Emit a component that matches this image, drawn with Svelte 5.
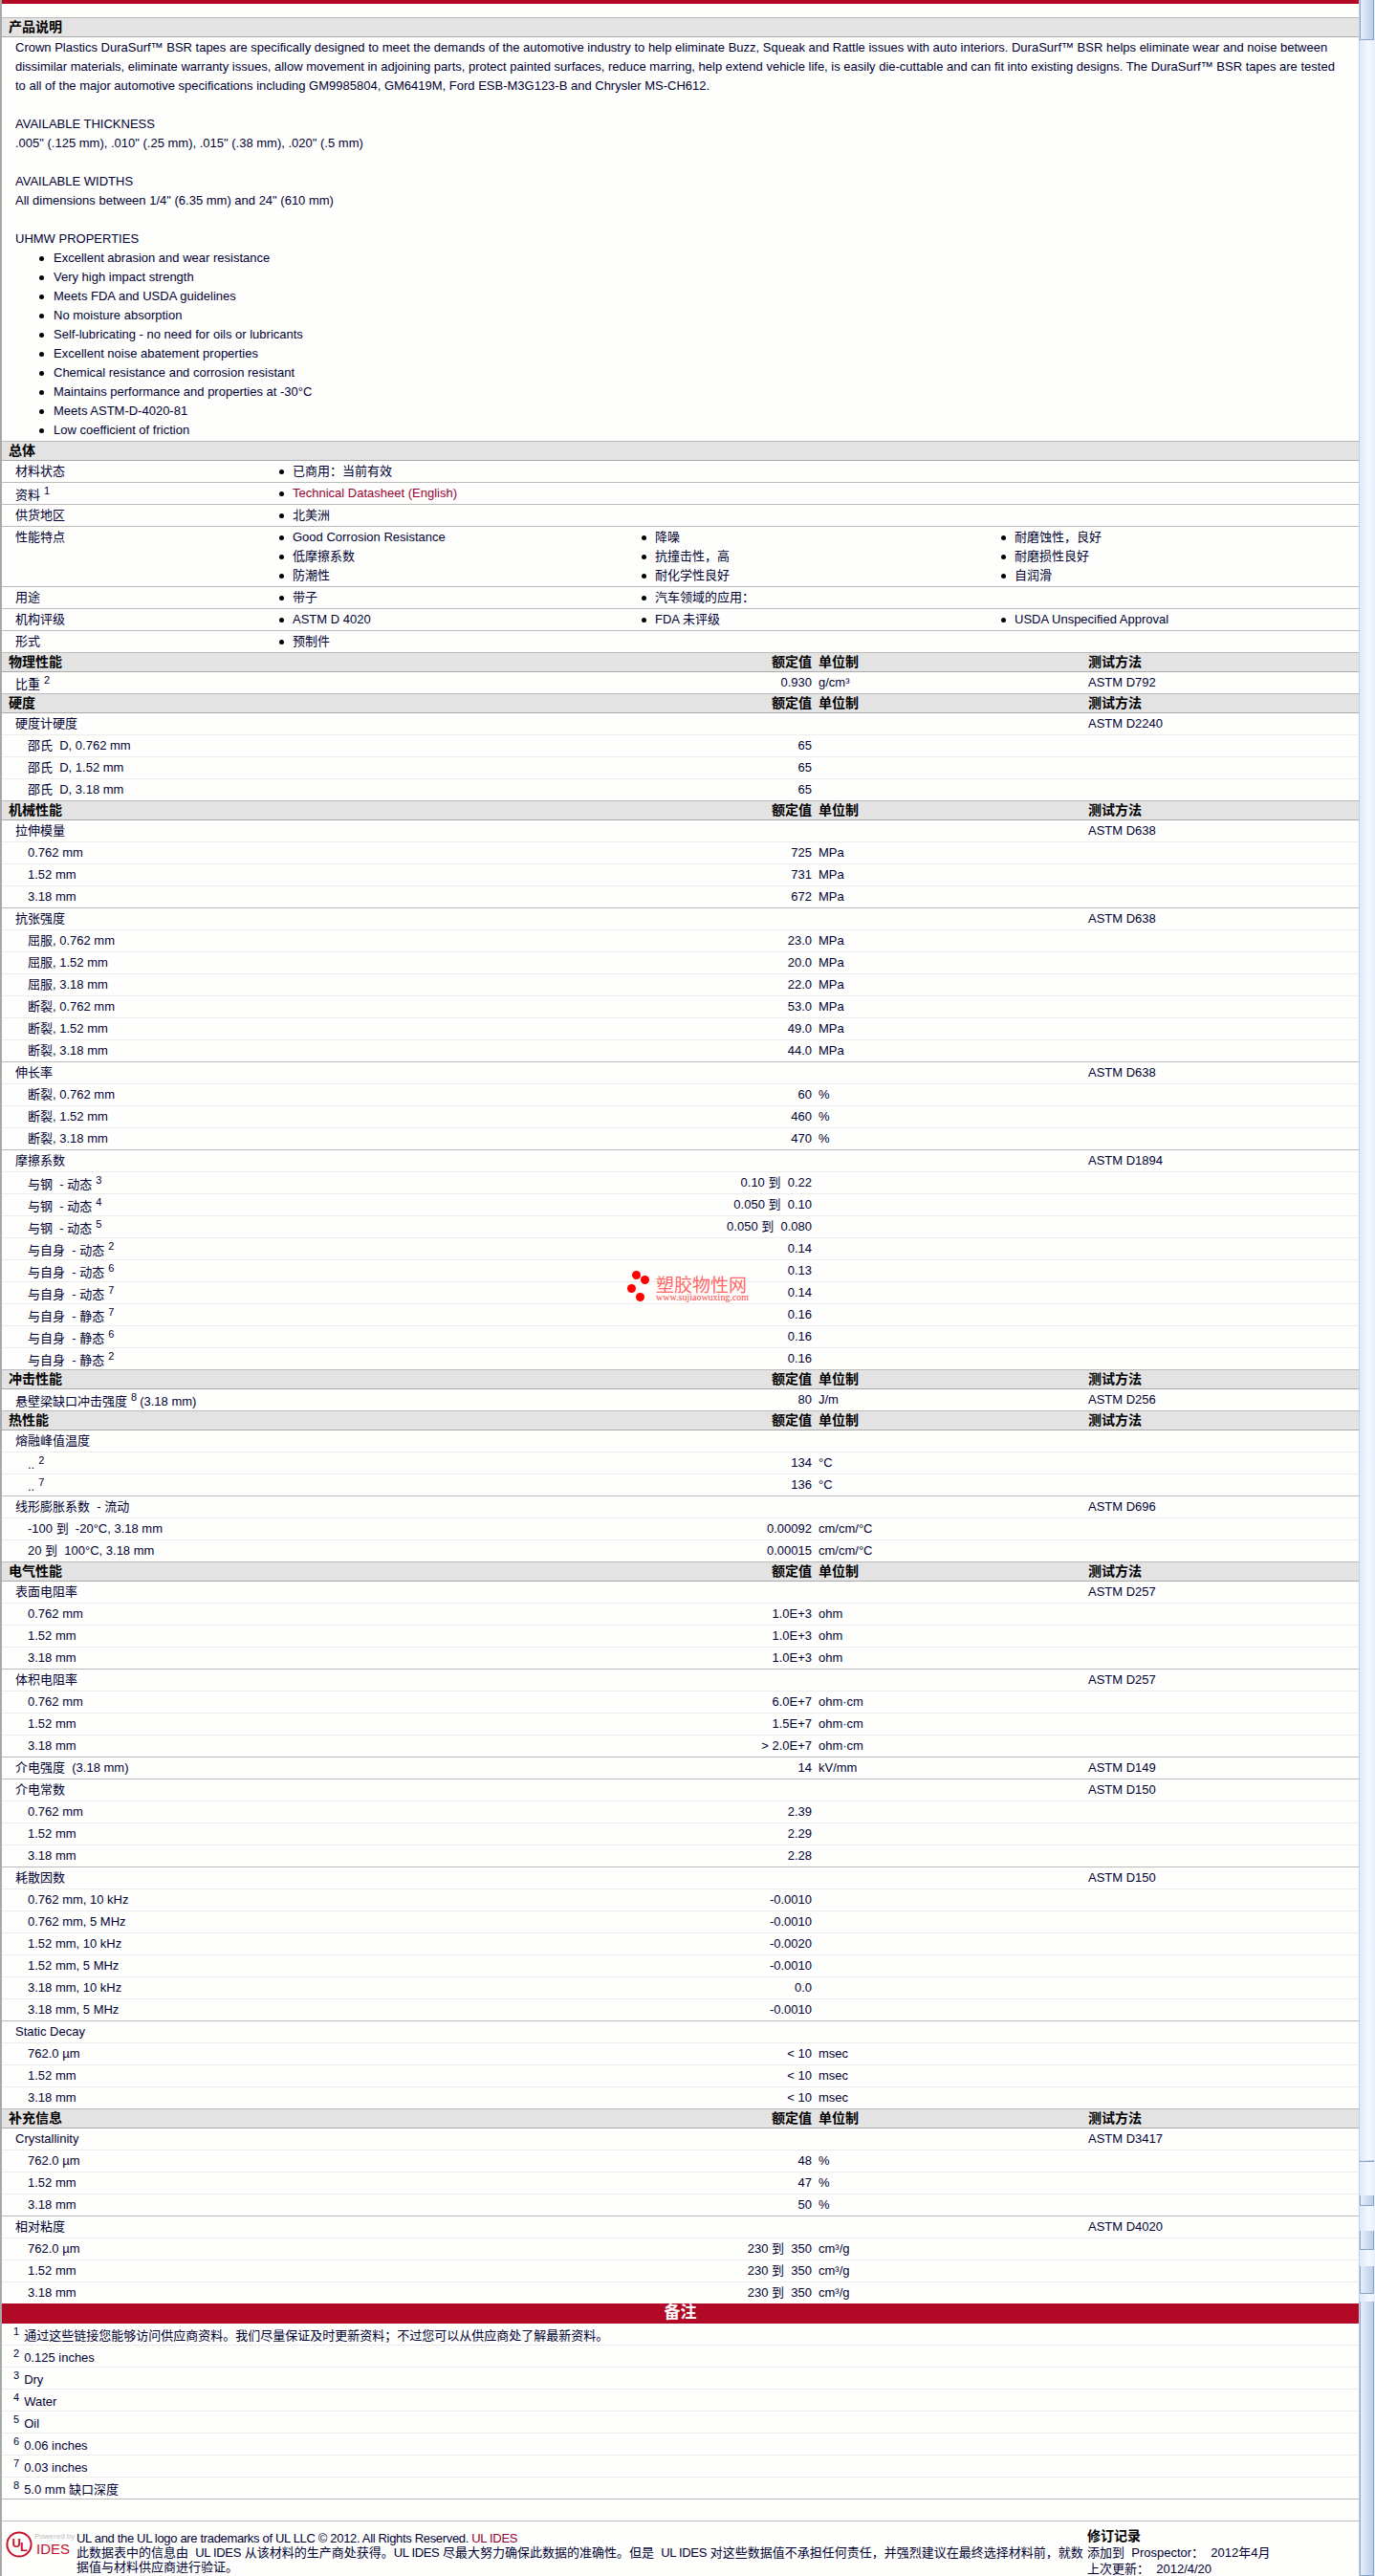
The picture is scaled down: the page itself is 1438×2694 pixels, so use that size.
<script lang="ts">
  type Row = {
    label: string;
    sup?: string;
    after?: string;
    value?: string;
    unit?: string;
    test?: string;
    indent?: boolean;
    end?: boolean;
  };
  type Section = { title: string; rows: Row[] };

  // builds a parameter group: head row + indented value rows, the last with the darker rule
  function group(label: string, test: string, items: [string, string, string?, string?][]): Row[] {
    const head: Row = { label, test };
    const rows = items.map(([l, value, unit, sup], i) => ({
      label: l,
      value,
      unit,
      sup,
      indent: true,
      end: i === items.length - 1,
    }));
    return [head, ...rows];
  }

  const sizes = (vals: string[], unit: string, first = "0.762 mm"): [string, string, string][] => [
    [first, vals[0], unit],
    ["1.52 mm", vals[1], unit],
    ["3.18 mm", vals[2], unit],
  ];

  const sections: Section[] = [
    {
      title: "物理性能",
      rows: [{ label: "比重", sup: "2", value: "0.930", unit: "g/cm³", test: "ASTM D792", end: true }],
    },
    {
      title: "硬度",
      rows: group("硬度计硬度", "ASTM D2240", [
        ["邵氏  D, 0.762 mm", "65"],
        ["邵氏  D, 1.52 mm", "65"],
        ["邵氏  D, 3.18 mm", "65"],
      ]),
    },
    {
      title: "机械性能",
      rows: [
        ...group("拉伸模量", "ASTM D638", sizes(["725", "731", "672"], "MPa")),
        ...group("抗张强度", "ASTM D638", [
          ["屈服, 0.762 mm", "23.0", "MPa"],
          ["屈服, 1.52 mm", "20.0", "MPa"],
          ["屈服, 3.18 mm", "22.0", "MPa"],
          ["断裂, 0.762 mm", "53.0", "MPa"],
          ["断裂, 1.52 mm", "49.0", "MPa"],
          ["断裂, 3.18 mm", "44.0", "MPa"],
        ]),
        ...group("伸长率", "ASTM D638", [
          ["断裂, 0.762 mm", "60", "%"],
          ["断裂, 1.52 mm", "460", "%"],
          ["断裂, 3.18 mm", "470", "%"],
        ]),
        ...group("摩擦系数", "ASTM D1894", [
          ["与钢  - 动态", "0.10 到  0.22", "", "3"],
          ["与钢  - 动态", "0.050 到  0.10", "", "4"],
          ["与钢  - 动态", "0.050 到  0.080", "", "5"],
          ["与自身  - 动态", "0.14", "", "2"],
          ["与自身  - 动态", "0.13", "", "6"],
          ["与自身  - 动态", "0.14", "", "7"],
          ["与自身  - 静态", "0.16", "", "7"],
          ["与自身  - 静态", "0.16", "", "6"],
          ["与自身  - 静态", "0.16", "", "2"],
        ]),
      ],
    },
    {
      title: "冲击性能",
      rows: [
        { label: "悬壁梁缺口冲击强度", sup: "8", after: "(3.18 mm)", value: "80", unit: "J/m", test: "ASTM D256", end: true },
      ],
    },
    {
      title: "热性能",
      rows: [
        ...group("熔融峰值温度", "", [
          ["..", "134", "°C", "2"],
          ["..", "136", "°C", "7"],
        ]),
        ...group("线形膨胀系数  - 流动", "ASTM D696", [
          ["-100 到  -20°C, 3.18 mm", "0.00092", "cm/cm/°C"],
          ["20 到  100°C, 3.18 mm", "0.00015", "cm/cm/°C"],
        ]),
      ],
    },
    {
      title: "电气性能",
      rows: [
        ...group("表面电阻率", "ASTM D257", sizes(["1.0E+3", "1.0E+3", "1.0E+3"], "ohm")),
        ...group("体积电阻率", "ASTM D257", sizes(["6.0E+7", "1.5E+7", "> 2.0E+7"], "ohm·cm")),
        { label: "介电强度", after: "  (3.18 mm)", value: "14", unit: "kV/mm", test: "ASTM D149", end: true },
        ...group("介电常数", "ASTM D150", sizes(["2.39", "2.29", "2.28"], "")),
        ...group("耗散因数", "ASTM D150", [
          ["0.762 mm, 10 kHz", "-0.0010"],
          ["0.762 mm, 5 MHz", "-0.0010"],
          ["1.52 mm, 10 kHz", "-0.0020"],
          ["1.52 mm, 5 MHz", "-0.0010"],
          ["3.18 mm, 10 kHz", "0.0"],
          ["3.18 mm, 5 MHz", "-0.0010"],
        ]),
        ...group("Static Decay", "", sizes(["< 10", "< 10", "< 10"], "msec", "762.0 µm")),
      ],
    },
    {
      title: "补充信息",
      rows: [
        ...group("Crystallinity", "ASTM D3417", sizes(["48", "47", "50"], "%", "762.0 µm")),
        ...group("相对粘度", "ASTM D4020", sizes(["230 到  350", "230 到  350", "230 到  350"], "cm³/g", "762.0 µm")),
      ],
    },
  ];

  const general = [
    { label: "材料状态", items: [["已商用：当前有效"]] },
    { label: "资料", sup: "1", link: true, items: [["Technical Datasheet (English)"]] },
    { label: "供货地区", items: [["北美洲"]] },
    {
      label: "性能特点",
      items: [
        ["Good Corrosion Resistance", "降噪", "耐磨蚀性，良好"],
        ["低摩擦系数", "抗撞击性，高", "耐磨损性良好"],
        ["防潮性", "耐化学性良好", "自润滑"],
      ],
    },
    { label: "用途", items: [["带子", "汽车领域的应用："]] },
    { label: "机构评级", items: [["ASTM D 4020", "FDA 未评级", "USDA Unspecified Approval"]] },
    { label: "形式", items: [["预制件"]] },
  ];

  const uhmw = [
    "Excellent abrasion and wear resistance",
    "Very high impact strength",
    "Meets FDA and USDA guidelines",
    "No moisture absorption",
    "Self-lubricating - no need for oils or lubricants",
    "Excellent noise abatement properties",
    "Chemical resistance and corrosion resistant",
    "Maintains performance and properties at -30°C",
    "Meets ASTM-D-4020-81",
    "Low coefficient of friction",
  ];

  const notes = [
    "通过这些链接您能够访问供应商资料。我们尽量保证及时更新资料；不过您可以从供应商处了解最新资料。",
    "0.125 inches",
    "Dry",
    "Water",
    "Oil",
    "0.06 inches",
    "0.03 inches",
    "5.0 mm 缺口深度",
  ];

  const thumbs = [
    { top: 0, height: 42 },
    { top: 2259, height: 2 },
    { top: 2296, height: 11 },
    { top: 2333, height: 20 },
    { top: 2370, height: 29 },
    { top: 2407, height: 287 },
  ];
</script>

<div class="page">
  <div class="sheet">
    <div class="topbar"></div>
    <div class="topgap"></div>

    <div class="section"><b>产品说明</b></div>
    <div class="desc">
      <p>Crown Plastics DuraSurf™ BSR tapes are specifically designed to meet the demands of the automotive industry to help eliminate Buzz, Squeak and Rattle issues with auto interiors. DuraSurf™ BSR helps eliminate wear and noise between</p>
      <p>dissimilar materials, eliminate warranty issues, allow movement in adjoining parts, protect painted surfaces, reduce marring, help extend vehicle life, is easily die-cuttable and can fit into existing designs. The DuraSurf™ BSR tapes are tested</p>
      <p>to all of the major automotive specifications including GM9985804, GM6419M, Ford ESB-M3G123-B and Chrysler MS-CH612.</p>
      <p class="gap">AVAILABLE THICKNESS</p>
      <p>.005" (.125 mm), .010" (.25 mm), .015" (.38 mm), .020" (.5 mm)</p>
      <p class="gap">AVAILABLE WIDTHS</p>
      <p>All dimensions between 1/4" (6.35 mm) and 24" (610 mm)</p>
      <p class="gap">UHMW PROPERTIES</p>
      <ul>
        {#each uhmw as item}
          <li><span class="dot"></span>{item}</li>
        {/each}
      </ul>
    </div>

    <div class="section"><b>总体</b></div>
    {#each general as g}
      <div class="row general">
        <div class="label" class:raised={g.sup}>{g.label}{#if g.sup}<sup>{g.sup}</sup>{/if}</div>
        <div class="bullets">
          {#each g.items as line}
            {#each [0, 1, 2] as c}
              <div class="bullet-cell">
                {#if line[c]}
                  <span class="dot"></span><span class:link={g.link}>{line[c]}</span>
                {/if}
              </div>
            {/each}
          {/each}
        </div>
      </div>
    {/each}

    {#each sections as s}
      <div class="section cols">
        <b>{s.title}</b>
        <b class="value">额定值</b>
        <b class="unit">单位制</b>
        <b>测试方法</b>
      </div>
      {#each s.rows as r, i}
        <div class="row cols" class:end={r.end} class:noline={s.title === "补充信息" && i === s.rows.length - 1}>
          <div class="label" class:indent={r.indent} class:raised={r.sup}>
            {r.label}{#if r.sup}<sup>{r.sup}</sup>{/if}{#if r.after}{r.after}{/if}
          </div>
          <div class="value">{r.value ?? ""}</div>
          <div class="unit">{r.unit ?? ""}</div>
          <div>{r.test ?? ""}</div>
        </div>
      {/each}
    {/each}

    <div class="redbar">备注</div>
    {#each notes as n, i}
      <div class="row note" class:end={i === notes.length - 1}>
        <div class="raised"><sup>{i + 1}</sup>{n}</div>
      </div>
    {/each}
    <div class="row end"></div>

    <div class="footer">
      <div class="logo">
        <svg width="28" height="28" viewBox="0 0 28 28" aria-hidden="true">
          <circle cx="14" cy="14" r="12.6" fill="none" stroke="#c8102e" stroke-width="2" />
          <text x="6.5" y="16.5" class="ul-letter">U</text>
          <text x="15" y="21" class="ul-letter">L</text>
        </svg>
        <div class="ides">
          <small>Powered by</small>
          <span>IDES</span>
        </div>
      </div>
      <div class="legal">
        <span class="tight">UL and the UL logo are trademarks of UL LLC © 2012. All Rights Reserved. <span class="link">UL IDES</span></span><br />
        此数据表中的信息由 &nbsp;<span class="tight">UL IDES</span> 从该材料的生产商处获得。<span class="tight">UL IDES</span> 尽最大努力确保此数据的准确性。但是 &nbsp;<span class="tight">UL IDES</span> 对这些数据值不承担任何责任，并强烈建议在最终选择材料前，就数<br />
        据值与材料供应商进行验证。
      </div>
      <div class="revision">
        <b>修订记录</b>
        <div>添加到 &nbsp;Prospector： &nbsp;2012年4月</div>
        <div>上次更新： &nbsp;2012/4/20</div>
      </div>
    </div>

    <div class="watermark">
      <i class="d1"></i><i class="d2"></i><i class="d3"></i><i class="d4"></i>
      <div class="wm-name">塑胶物性网</div>
      <div class="wm-url">www.sujiaowuxing.com</div>
    </div>
  </div>

  <div class="scrollbar" aria-hidden="true">
    {#each thumbs as t}
      <div class="thumb" style="top: {t.top}px; height: {t.height}px"></div>
    {/each}
  </div>
</div>

<style>
  :global(body) {
    margin: 0;
    background: #fff;
  }
  .page {
    display: flex;
    width: 1438px;
    height: 2694px;
    overflow: hidden;
  }
  .sheet {
    position: relative;
    box-sizing: border-box;
    width: 1421px;
    flex: none;
    border-left: 2px solid #a8a8a8;
    font: 13px/20px "Liberation Sans", "Noto Sans CJK SC", sans-serif;
    color: #000033;
    background: #fefffd;
  }
  .topbar {
    height: 4px;
    background: #b20a26;
  }
  .topgap {
    height: 14px;
    border-bottom: 1px solid #bbb;
  }
  .section {
    box-sizing: border-box;
    height: 20px;
    padding-left: 7px;
    background: #e3e3e3;
    border-bottom: 1px solid #aaa;
    font-size: 14px;
    line-height: 19px;
    color: #000;
  }
  .desc {
    padding: 1px 0 1px 14px;
    border-bottom: 1px solid #bbb;
  }
  .desc p {
    margin: 0;
    white-space: nowrap;
  }
  .desc .gap {
    margin-top: 20px;
  }
  .desc ul {
    margin: 0;
    padding: 0 0 0 25px;
    list-style: none;
  }
  .desc li {
    display: flex;
    align-items: center;
  }
  .desc li .dot {
    margin-right: 10px;
  }
  .row {
    box-sizing: border-box;
    min-height: 23px;
    padding: 1px 0;
    border-bottom: 1px solid #ececec;
  }
  .row.end {
    border-bottom-color: #bbb;
  }
  .row.noline {
    min-height: 22px;
    border-bottom: 0;
  }
  .cols {
    display: grid;
    grid-template-columns: 500px 347px 289px 1fr;
  }
  .section.cols {
    padding-left: 0;
  }
  .section.cols > b:first-child {
    padding-left: 7px;
  }
  .label {
    padding-left: 14px;
    white-space: pre;
    color: #000033;
  }
  .label.indent {
    padding-left: 27px;
  }
  .raised {
    padding-top: 2px;
    margin-bottom: -2px;
  }
  .cols .value {
    text-align: right;
    white-space: pre;
  }
  .cols .unit {
    padding-left: 7px;
    white-space: nowrap;
  }
  sup {
    font-size: 11px;
    line-height: 0;
    margin: 0 3px 0 4px;
    vertical-align: 5px;
  }
  .general {
    display: flex;
    border-bottom-color: #bbb;
  }
  .general .label {
    width: 290px;
    flex: none;
    box-sizing: border-box;
  }
  .bullets {
    display: grid;
    grid-template-columns: 379px 376px 1fr;
    flex: 1;
  }
  .bullet-cell {
    display: flex;
    align-items: center;
    min-height: 20px;
    white-space: nowrap;
  }
  .dot {
    flex: none;
    width: 5px;
    height: 5px;
    margin-right: 9px;
    border-radius: 50%;
    background: #000;
  }
  .link {
    color: #990033;
  }
  .redbar {
    box-sizing: border-box;
    height: 21px;
    background: #b20a26;
    color: #fff;
    font-weight: 700;
    font-size: 17px;
    line-height: 20px;
    text-align: center;
  }
  .note {
    padding-left: 12px;
    white-space: pre;
  }
  .note sup {
    margin: 0 5px 0 0;
  }
  .footer {
    display: flex;
    height: 57px;
    overflow: hidden;
  }
  .logo {
    display: flex;
    box-sizing: border-box;
    width: 78px;
    flex: none;
    padding: 10px 0 0 4px;
  }
  .ul-letter {
    font-size: 13px;
    font-weight: 700;
    fill: #c8102e;
  }
  .ides {
    display: flex;
    flex-direction: column;
    margin-left: 2px;
    color: #c8102e;
    font-size: 15px;
    line-height: 16px;
  }
  .ides small {
    font-size: 8px;
    line-height: 11px;
    color: #bbb;
    white-space: nowrap;
  }
  .ides span {
    padding-left: 2px;
  }
  .legal {
    width: 1057px;
    flex: none;
    padding-top: 10px;
    line-height: 15px;
    white-space: nowrap;
  }
  .tight {
    letter-spacing: -0.33px;
  }
  .revision {
    padding-top: 7px;
    line-height: 17px;
    white-space: nowrap;
  }
  .revision b {
    display: block;
    font-size: 14px;
    color: #000;
  }
  .watermark {
    position: absolute;
    left: 654px;
    top: 1328px;
    width: 130px;
    height: 36px;
  }
  .watermark i {
    position: absolute;
    width: 9px;
    height: 9px;
    border-radius: 50%;
    background: #f00;
  }
  .d1 { left: 5px; top: 1px; }
  .d2 { left: 14px; top: 6px; }
  .d3 { left: 0; top: 15px; }
  .d4 { left: 9px; top: 24px; }
  .wm-name {
    position: absolute;
    left: 30px;
    top: 8px;
    font-size: 19px;
    line-height: 18px;
    color: #f66;
    white-space: nowrap;
  }
  .wm-url {
    position: absolute;
    left: 30px;
    top: 24px;
    font: 10px/10px "Liberation Serif", serif;
    color: #f44;
    white-space: nowrap;
  }
  .scrollbar {
    position: relative;
    box-sizing: border-box;
    width: 17px;
    flex: none;
    background: linear-gradient(90deg, #dde9fb, #f3f7fe 60%, #e8effb);
    border-left: 1px solid #c3d2e8;
  }
  .thumb {
    position: absolute;
    left: 0;
    right: 1px;
    box-sizing: border-box;
    background: linear-gradient(90deg, #e6effd, #b9cdea);
    border: 1px solid #8aa3c4;
    border-top: 0;
  }
</style>
